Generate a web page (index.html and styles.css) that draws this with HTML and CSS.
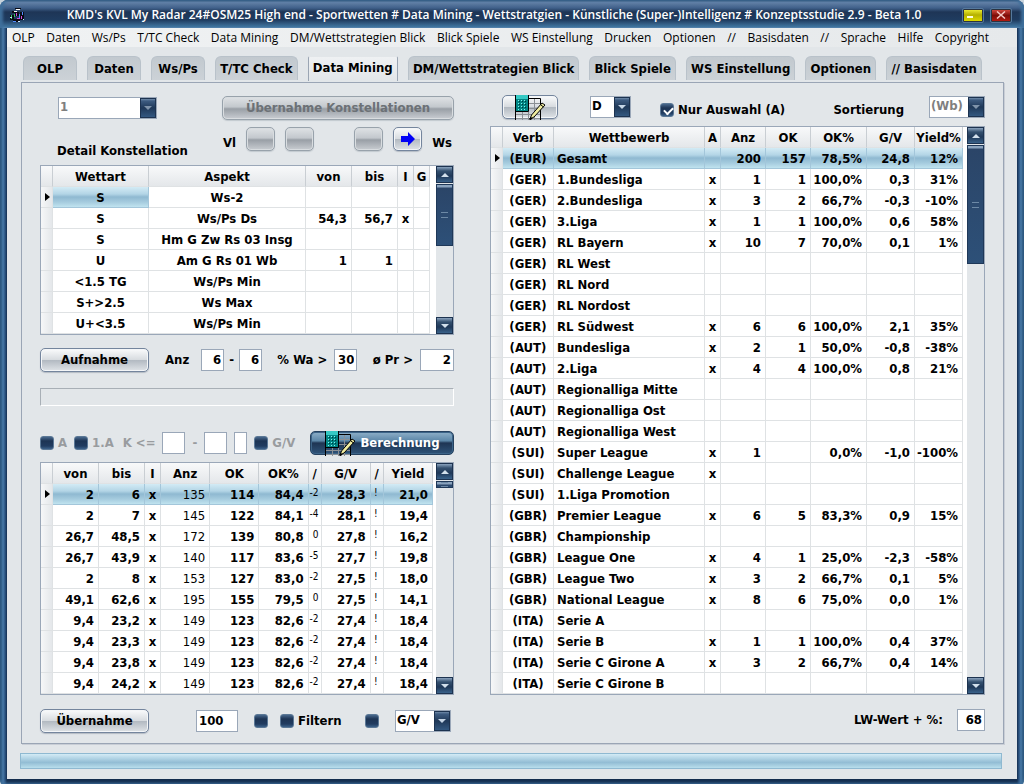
FILE: index.html
```html
<!DOCTYPE html>
<html lang="de">
<head>
    <meta charset="UTF-8">
    <meta name="viewport" content="width=device-width, initial-scale=1.0">
    <title>KMD's KVL My Radar 24#OSM25</title>
    <link rel="stylesheet" href="styles.css">
</head>
<body>
    <!-- Icon shared by the two calculation buttons -->
    <svg class="defs" aria-hidden="true">
        <symbol id="calc" viewBox="0 0 32 25">
            <path d="M8.500 17V25M14.500 17V25M20.500 4V25M15 8.500H26M15 13.500H26M2 19.500H26M2 23.500H26" fill="none" stroke="#8a8f94"/>
            <path d="M1.500 25V16M15 3.500H26.500V25" fill="none" stroke="#000"/>
            <path d="M1 0H15V16H1Z" fill="#008584"/>
            <path d="M2 0H14V4H2Z" fill="#35c9c4"/>
            <path d="M1.500 0V16.500H14.500V0" fill="none" stroke="#000"/>
            <path d="M4 5.500H13M4 8.500H13M4 11.500H13M4 14.500H13" stroke="#7df5ee" stroke-dasharray="1 2"/>
            <path d="M5 6.500H13M5 9.500H13M5 12.500H13" stroke="#003c3c" stroke-dasharray="1 2"/>
            <path d="M28 8L31 10L20 22L16 24L17.500 20Z" fill="#f1eda0" stroke="#000"/>
            <path d="M27 10L29.500 12" stroke="#000"/>
            <path d="M15.500 24.500L18 23" stroke="#000" stroke-width="2"/>
        </symbol>
    </svg>

    <div class="window">
        <header class="titlebar">
            <svg class="app-icon" viewBox="0 0 16 16" aria-hidden="true">
                <path d="M3 4H7V6H3ZM6 1H12V2H6ZM1 8H5V13H1ZM6 5H10V9H6ZM11 5H15V13H11ZM4 12H11V15H4Z" fill="#0a0a14"/>
                <path d="M7 2.500H11M5 4.500H8" stroke="#fff"/>
                <path d="M2.500 8V12M5.500 7V10" stroke="#39c46b"/>
                <path d="M7.500 6V9M8 11.500H11M12.500 9V12" stroke="#d24be0"/>
                <path d="M10.500 7V11M13.500 5V8M4 14.500H7" stroke="#4f8cff"/>
                <path d="M1 10.500H3M9 14.500H11M14 12.500H15" stroke="#c9e6ff"/>
            </svg>
            <h1 class="title">KMD's KVL My Radar 24#OSM25 High end - Sportwetten # Data Mining - Wettstratgien - Künstliche (Super-)Intelligenz # Konzeptsstudie 2.9 - Beta 1.0</h1>
            <button class="win-btn minimize" aria-label="Minimieren"></button>
            <button class="win-btn close" aria-label="Schließen">
                <svg viewBox="0 0 10 8" width="10" height="8"><path d="M1 0.500L9 7.500M9 0.500L1 7.500" stroke="#f3c8c4" stroke-width="1.500"/></svg>
            </button>
        </header>

        <div class="client">
            <nav class="menu">
                <a href="#">OLP</a>
                <a href="#">Daten</a>
                <a href="#">Ws/Ps</a>
                <a href="#">T/TC Check</a>
                <a href="#">Data Mining</a>
                <a href="#">DM/Wettstrategien Blick</a>
                <a href="#">Blick Spiele</a>
                <a href="#">WS Einstellung</a>
                <a href="#">Drucken</a>
                <a href="#">Optionen</a>
                <span>//</span>
                <a href="#">Basisdaten</a>
                <span>//</span>
                <a href="#">Sprache</a>
                <a href="#">Hilfe</a>
                <a href="#">Copyright</a>
            </nav>

            <div class="tabs" role="tablist">
                <button class="tab" role="tab">OLP</button>
                <button class="tab" role="tab">Daten</button>
                <button class="tab" role="tab">Ws/Ps</button>
                <button class="tab" role="tab">T/TC Check</button>
                <button class="tab active" role="tab" aria-selected="true">Data Mining</button>
                <button class="tab" role="tab">DM/Wettstrategien Blick</button>
                <button class="tab" role="tab">Blick Spiele</button>
                <button class="tab" role="tab">WS Einstellung</button>
                <button class="tab" role="tab">Optionen</button>
                <button class="tab" role="tab">// Basisdaten</button>
            </div>

            <main class="panel">
                <section class="left">
                    <div class="row top-row">
                        <div class="select w-100">
                            <select aria-label="Konstellation" disabled><option>1</option></select>
                        </div>
                        <button class="btn takeover" disabled>Übernahme Konstellationen</button>
                    </div>

                    <div class="row nav-row">
                        <h2 class="caption">Detail Konstellation</h2>
                        <span>Vl</span>
                        <button class="btn step" aria-label="Erste" disabled></button>
                        <button class="btn step" aria-label="Zurück" disabled></button>
                        <button class="btn step step-right" aria-label="Vor" disabled></button>
                        <button class="btn step" aria-label="Weiter">
                            <svg viewBox="0 0 14 14" width="14" height="14"><path d="M0 4H7V0L14 7L7 14V10H0Z" fill="#0000f5"/></svg>
                        </button>
                        <span>Ws</span>
                    </div>

                    <div class="grid">
                        <table class="details">
                            <colgroup><col class="c-mark"><col class="c-art"><col><col class="c-num"><col class="c-num"><col class="c-flag"><col class="c-flag"></colgroup>
                            <thead>
                                <tr><th></th><th>Wettart</th><th>Aspekt</th><th>von</th><th>bis</th><th>I</th><th>G</th></tr>
                            </thead>
                            <tbody id="details"></tbody>
                        </table>
                        <div class="scroll"><i class="up"></i><i class="thumb thumb-details"></i><i class="down"></i></div>
                    </div>

                    <div class="row record-row">
                        <button class="btn wide">Aufnahme</button>
                        <label class="anz" for="anzFrom">Anz</label>
                        <input class="field w-24" id="anzFrom" type="text" value="6">
                        <label class="dash" for="anzTo">-</label>
                        <input class="field w-24" id="anzTo" type="text" value="6">
                        <label class="push" for="wa">% Wa &gt;</label>
                        <input class="field w-24" id="wa" type="text" value="30">
                        <label class="push" for="pr">ø Pr &gt;</label>
                        <input class="field w-34" id="pr" type="text" value="2">
                    </div>

                    <div class="track"></div>

                    <div class="row calc-row">
                        <label class="check muted"><input type="checkbox" disabled>A</label>
                        <label class="check muted"><input type="checkbox" disabled>1.A</label>
                        <label class="k-label muted" for="kFrom">K &lt;=</label>
                        <input class="field w-24" id="kFrom" type="text" disabled>
                        <label class="muted" for="kTo">-</label>
                        <input class="field w-24" id="kTo" type="text" disabled>
                        <input class="field w-14" type="text" aria-label="K Option" disabled>
                        <label class="check muted"><input type="checkbox" disabled>G/V</label>
                        <button class="btn dark"><svg class="calc-icon"><use href="#calc"/></svg>Berechnung</button>
                    </div>

                    <div class="grid">
                        <table class="results">
                            <colgroup><col class="c-mark"><col class="c-num"><col class="c-num"><col class="c-flag"><col><col><col><col class="c-sign"><col><col class="c-sign"><col></colgroup>
                            <thead>
                                <tr><th></th><th>von</th><th>bis</th><th>I</th><th>Anz</th><th>OK</th><th>OK%</th><th>/</th><th>G/V</th><th>/</th><th>Yield</th></tr>
                            </thead>
                            <tbody id="results"></tbody>
                        </table>
                        <div class="scroll"><i class="up"></i><i class="thumb thumb-results"></i><i class="down"></i></div>
                    </div>

                    <div class="row bottom-row">
                        <button class="btn wide">Übernahme</button>
                        <input class="field limit" type="text" value="100" aria-label="Limit">
                        <input type="checkbox" aria-label="Limit aktiv">
                        <label class="check filter"><input type="checkbox">Filtern</label>
                        <input type="checkbox" aria-label="Sortieren">
                        <div class="select w-56">
                            <select aria-label="Sortierfeld"><option>G/V</option></select>
                        </div>
                    </div>
                </section>

                <section class="right">
                    <div class="row league-row">
                        <button class="btn calc" aria-label="Berechnen"><svg class="calc-icon"><use href="#calc"/></svg></button>
                        <div class="select w-42">
                            <select aria-label="Modus"><option>D</option></select>
                        </div>
                        <label class="check"><input type="checkbox" checked>Nur Auswahl (A)</label>
                        <label class="sort-label" for="sort">Sortierung</label>
                        <div class="select w-56">
                            <select id="sort" disabled><option>(Wb)</option></select>
                        </div>
                    </div>

                    <div class="grid">
                        <table class="leagues">
                            <colgroup><col class="c-mark"><col class="c-verb"><col><col class="c-flag"><col class="c-count"><col class="c-count"><col class="c-pct"><col class="c-yield"><col class="c-yield"></colgroup>
                            <thead>
                                <tr><th></th><th>Verb</th><th>Wettbewerb</th><th>A</th><th>Anz</th><th>OK</th><th>OK%</th><th>G/V</th><th>Yield%</th></tr>
                            </thead>
                            <tbody id="leagues"></tbody>
                        </table>
                        <div class="scroll"><i class="up"></i><i class="thumb thumb-leagues"></i><i class="down"></i></div>
                    </div>

                    <div class="row bottom-row lw-row">
                        <label for="lw">LW-Wert + %:</label>
                        <input class="field w-28" id="lw" type="text" value="68">
                    </div>
                </section>
            </main>

            <div class="status"></div>
        </div>
    </div>

    <script src="script.js"></script>
</body>
</html>
```

FILE: styles.css
```css
* {
    box-sizing: border-box;
}

body {
    margin: 0;
    font-family: "DejaVu Sans Condensed", "DejaVu Sans", sans-serif;
    font-size: 13px;
    font-weight: bold;
    line-height: 16px;
    color: #000;
    background-color: #c8d3dc;
}

button, input, select {
    font: inherit;
    color: inherit;
    margin: 0;
}

.defs {
    display: none;
}

/* Window frame */
.window {
    min-height: 100vh;
    display: flex;
    flex-direction: column;
    padding: 0 7px 7px;
    border-radius: 8px 8px 6px 6px;
    background: linear-gradient(to right, #1d4467, #4a7ba8 3px, #2c5583 5px, #142d4e 7px, #142d4e calc(100% - 7px), #2c5583 calc(100% - 5px), #4a7ba8 calc(100% - 3px), #1d4467);
    box-shadow: inset 0 -3px 3px #3f6f9b;
}

.titlebar {
    display: flex;
    align-items: center;
    height: 28px;
    margin: 0 -7px;
    padding: 2px 13px 0 9px;
    border-radius: 8px 8px 0 0;
    background: linear-gradient(#1d3a5c, #6583a8 2px, #40608a 8px, #1e3556 12px, #1f3c60 20px, #4378a2 27px, #8fb8d4);
    box-shadow: inset 3px 0 3px #3f6f9b, inset -3px 0 3px #3f6f9b;
}

.app-icon {
    width: 16px;
    height: 16px;
}

.title {
    flex: 1;
    margin: 0;
    padding-left: 8px;
    font-family: "Open Sans", "Noto Sans", sans-serif;
    font-size: 12px;
    font-weight: 600;
    line-height: 16px;
    text-align: center;
    white-space: nowrap;
    color: #fff;
}

.win-btn {
    display: flex;
    align-items: center;
    justify-content: center;
    width: 20px;
    height: 13px;
    margin-left: 8px;
    padding: 0;
    border: 1px solid #2a3340;
    border-radius: 1px;
    outline: 1px solid #55789c;
}

.minimize {
    background: linear-gradient(#eaea30, #b5b000 45%, #dcd800);
}

.minimize::before {
    content: "";
    width: 6px;
    height: 2px;
    margin: 4px 6px 0 0;
    background-color: #fffde0;
}

.close {
    background: linear-gradient(#d0453c, #7e0d08 50%, #b01a10);
}

.client {
    flex: 1;
    display: flex;
    flex-direction: column;
    background-color: #e2e6e9;
}

/* Menu and tabs */
.menu {
    display: flex;
    justify-content: space-between;
    padding: 2px 28px 1px 5px;
    font-family: "Open Sans", "Noto Sans", sans-serif;
    font-size: 12px;
    font-weight: normal;
    white-space: nowrap;
    background: linear-gradient(to right, #f0f2f3, #e6e9eb);
}

.menu a {
    color: inherit;
    text-decoration: none;
}

.tabs {
    display: flex;
    gap: 10px;
    margin: 9px 35px 0 16px;
}

.tab {
    flex: 1 1 auto;
    min-width: 54px;
    height: 24px;
    padding: 0 4px;
    border: 1px solid #b9c2ca;
    border-bottom: none;
    border-radius: 6px 6px 0 0;
    white-space: nowrap;
    background: linear-gradient(#c2c9cf, #ccd2d7);
}

.tab.active {
    height: 25px;
    margin-bottom: 1px;
    padding-bottom: 3px;
    border-color: #e2e6e9 #9aa5b3;
    border-radius: 2px 2px 0 0;
    background: linear-gradient(#eff1f3, #e2e6e9);
}

.panel {
    display: grid;
    grid-template-columns: 414fr 495fr;
    gap: 36px;
    margin: 0 13px 0 14px;
    padding: 13px 18px 10px;
    border: 1px solid #9aa5b5;
    box-shadow: 1px 1px 0 #c9ced6;
}

.left, .right {
    min-width: 0;
}

.row {
    display: flex;
    align-items: center;
    white-space: nowrap;
}

/* Buttons */
.btn {
    display: flex;
    align-items: center;
    justify-content: center;
    height: 24px;
    padding: 0;
    border: 1px solid #74859d;
    border-radius: 5px;
    background: linear-gradient(#fafbfc, #d8dce0 48%, #b3bac2 52%, #dfe3e7);
    box-shadow: inset 0 0 0 1px #f4f6f8, 0 1px 1px #b4bbc4;
}

.btn:disabled {
    border-color: #98a2ab;
    color: #6c7176;
    background: linear-gradient(#dfe2e5, #c3c8cd 45%, #999fa6 54%, #c9cdd2);
    box-shadow: inset 0 0 0 1px #d9dde0, 0 1px 1px #c3c9cf;
}

.btn.wide {
    width: 109px;
}

.btn.dark {
    width: 144px;
    margin-left: auto;
    gap: 4px;
    border-color: #25415f;
    color: #fff;
    background: linear-gradient(#8fb0c9, #5c87a8 40%, #1e3553 50%, #2f5479);
    box-shadow: inset 0 0 0 1px #3c6488;
}

.calc-icon {
    width: 32px;
    height: 25px;
}

/* Fields */
.field {
    flex: none;
    height: 22px;
    padding: 0 2px 2px;
    border: 1px solid #9aa7b8;
    text-align: right;
    background-color: #fff;
}

.w-14 { width: 13px; }
.w-24 { width: 23px; }
.w-28 { width: 28px; }
.w-34 { width: 34px; }
.w-42 { width: 41px; }
.w-56 { width: 56px; }
.w-100 { width: 99px; }

.select {
    flex: none;
    position: relative;
    height: 22px;
}

.select select {
    width: 100%;
    height: 22px;
    padding: 0 18px 2px 1px;
    border: 1px solid #9aa7b8;
    border-radius: 0;
    appearance: none;
    background-color: #fff;
}

.select select:disabled {
    color: #7f7f7f;
    opacity: 1;
}

.select::before {
    content: "";
    position: absolute;
    top: 1px;
    right: 1px;
    width: 16px;
    height: 20px;
    background: linear-gradient(#8aa3be, #3d5b80 3px, #1f3858 50%, #355b84);
    box-shadow: inset 0 0 0 1px #1d3350;
    pointer-events: none;
}

.select::after {
    content: "";
    position: absolute;
    top: 9px;
    right: 5px;
    border: 4px solid transparent;
    border-top-color: #c6d6e6;
    border-bottom: none;
    pointer-events: none;
}

.select:has(:disabled)::after {
    border-top-color: #7f93aa;
}

input[type="checkbox"] {
    flex: none;
    width: 14px;
    height: 14px;
    border: 1px solid #5b7896;
    border-radius: 3px;
    appearance: none;
    background: linear-gradient(#48688c, #1d3454 4px, #213c60 9px, #3c6189);
}

input[type="checkbox"]:checked::before {
    content: "";
    display: block;
    width: 7px;
    height: 4px;
    margin: 3px 0 0 3px;
    border-left: 2px solid #fff;
    border-bottom: 2px solid #fff;
    transform: rotate(-45deg);
}

.check {
    display: flex;
    align-items: center;
    gap: 4px;
}

.muted {
    color: #999c9f;
}

/* Rows of the left side */
.top-row {
    justify-content: space-between;
    padding-left: 18px;
}

.takeover {
    width: 232px;
}

.nav-row {
    gap: 10px;
    height: 45px;
    padding: 0 2px 0 17px;
}

.caption {
    flex: 1;
    margin: 16px 0 0;
    font-size: 13px;
    line-height: 16px;
}

.btn.step {
    width: 29px;
    margin-bottom: 8px;
}

.step-right {
    margin-left: 30px;
}

.record-row {
    margin-top: 13px;
}

.anz {
    margin: 0 12px 0 16px;
}

.dash {
    margin: 0 5px;
}

.push {
    margin-left: auto;
    margin-right: 7px;
}

.track {
    height: 18px;
    margin-top: 16px;
    border: 1px solid #a8afb6;
    border-right-color: #fff;
    border-bottom-color: #fff;
}

.calc-row {
    gap: 7px;
    margin: 25px 0 7px;
}

.k-label {
    margin-left: 2px;
}

.bottom-row {
    margin-top: 14px;
}

.left .bottom-row {
    padding-right: 3px;
}

.limit {
    width: 42px;
    margin: 0 16px 0 47px;
    text-align: left;
}

.filter {
    margin-left: 12px;
    margin-right: auto;
}

.bottom-row .w-56 {
    margin-left: 16px;
}

/* Row over the league table */
.league-row {
    height: 24px;
    margin: -1px 0 7px;
    padding-left: 12px;
}

.btn.calc {
    width: 56px;
    margin-right: 32px;
}

.league-row .check {
    margin: 6px auto 0 29px;
}

.sort-label {
    margin: 6px 25px 0 0;
}

.lw-row {
    justify-content: flex-end;
    gap: 14px;
}

/* Tables */
.grid {
    display: flex;
    gap: 6px;
    border: 1px solid #9aa7b8;
    background-color: #fff;
}

table {
    flex: 1;
    width: 0;
    table-layout: fixed;
    border-collapse: separate;
    border-spacing: 0;
}

th, td {
    height: 21px;
    padding: 1px 4px 0 2px;
    border-right: 1px solid #dfe2e4;
    border-bottom: 1px solid #dfe2e4;
    line-height: 16px;
    white-space: nowrap;
    text-align: right;
}

th {
    padding: 1px 0 0;
    border-right-color: #c9ced3;
    text-align: center;
    background: linear-gradient(#f8f9fa, #e4e7ea);
}

td:first-child {
    padding: 0;
    background: linear-gradient(to right, #f6f7f8, #e4e7ea);
}

.c-mark { width: 12px; }
.c-art { width: 96px; }
.c-num { width: 46px; }
.c-flag { width: 16px; }
.c-sign { width: 13px; }
.c-verb { width: 51px; }
.c-count { width: 45px; }
.c-pct { width: 56px; }
.c-yield { width: 48px; }

.center {
    padding: 1px 0 0;
    text-align: center;
}

.name {
    padding-left: 3px;
    text-align: left;
}

.thin {
    font-weight: normal;
}

.small {
    padding: 0 2px 3px 0;
    font-size: 10px;
    font-weight: normal;
}

.marker {
    display: block;
    margin-left: 4px;
    width: 0;
    border: 4px solid transparent;
    border-left: 5px solid #000;
    border-right: none;
}

.selected {
    border-color: #a3c6da;
    background: linear-gradient(#d3ebf5, #b3d5e6 35%, #8fb9d1 50%, #a5cbde 75%, #c0e3ef);
}

.scroll {
    flex: none;
    display: flex;
    flex-direction: column;
    width: 17px;
    background-color: #e2e6e9;
}

.leagues + .scroll {
    margin-left: -2px;
}

.results + .scroll {
    margin-left: -3px;
}

.up, .down {
    display: flex;
    align-items: center;
    justify-content: center;
    height: 17px;
    border: 1px solid #1d3350;
    background: linear-gradient(#8aa3be, #34506f 4px, #1f3858 60%, #3a628a);
}

.up::before, .down::before {
    content: "";
    border: 4px solid transparent;
}

.up::before {
    border-top: none;
    border-bottom-color: #d3e0ec;
}

.down::before {
    border-bottom: none;
    border-top-color: #d3e0ec;
}

.down {
    margin-top: auto;
}

.thumb {
    display: flex;
    align-items: center;
    justify-content: center;
    margin-top: 1px;
    border: 1px solid #1f3858;
    background: linear-gradient(#8aa3be, #8aa3be 2px, #2b4568 3px, #2d5078);
}

.thumb::before {
    content: "";
    width: 7px;
    height: 4px;
    border: 1px solid #6d89a6;
    border-left: none;
    border-right: none;
}

.thumb-details { height: 62px; }
.thumb-results { height: 7px; }
.thumb-results::before { height: 3px; }
.thumb-leagues { height: 119px; }

.status {
    height: 16px;
    margin: 9px 15px 10px 13px;
    border: 1px solid #8fb9d1;
    background: linear-gradient(#d3ebf5, #aed1e3 35%, #93bdd4 60%, #b9deec);
}
```

FILE: script.js
```js
const details = [
    ['S', 'Ws-2', '', '', '', ''],
    ['S', 'Ws/Ps Ds', '54,3', '56,7', 'x', ''],
    ['S', 'Hm G Zw Rs 03 Insg', '', '', '', ''],
    ['U', 'Am G Rs 01 Wb', '1', '1', '', ''],
    ['<1.5 TG', 'Ws/Ps Min', '', '', '', ''],
    ['S+>2.5', 'Ws Max', '', '', '', ''],
    ['U+<3.5', 'Ws/Ps Min', '', '', '', '']
];

const results = [
    ['2', '6', 'x', '135', '114', '84,4', '-2', '28,3', '!', '21,0'],
    ['2', '7', 'x', '145', '122', '84,1', '-4', '28,1', '!', '19,4'],
    ['26,7', '48,5', 'x', '172', '139', '80,8', '0', '27,8', '!', '16,2'],
    ['26,7', '43,9', 'x', '140', '117', '83,6', '-5', '27,7', '!', '19,8'],
    ['2', '8', 'x', '153', '127', '83,0', '-2', '27,5', '!', '18,0'],
    ['49,1', '62,6', 'x', '195', '155', '79,5', '0', '27,5', '!', '14,1'],
    ['9,4', '23,2', 'x', '149', '123', '82,6', '-2', '27,4', '!', '18,4'],
    ['9,4', '23,3', 'x', '149', '123', '82,6', '-2', '27,4', '!', '18,4'],
    ['9,4', '23,8', 'x', '149', '123', '82,6', '-2', '27,4', '!', '18,4'],
    ['9,4', '24,2', 'x', '149', '123', '82,6', '-2', '27,4', '!', '18,4']
];

const leagues = [
    ['(EUR)', 'Gesamt', '', '200', '157', '78,5%', '24,8', '12%'],
    ['(GER)', '1.Bundesliga', 'x', '1', '1', '100,0%', '0,3', '31%'],
    ['(GER)', '2.Bundesliga', 'x', '3', '2', '66,7%', '-0,3', '-10%'],
    ['(GER)', '3.Liga', 'x', '1', '1', '100,0%', '0,6', '58%'],
    ['(GER)', 'RL Bayern', 'x', '10', '7', '70,0%', '0,1', '1%'],
    ['(GER)', 'RL West', '', '', '', '', '', ''],
    ['(GER)', 'RL Nord', '', '', '', '', '', ''],
    ['(GER)', 'RL Nordost', '', '', '', '', '', ''],
    ['(GER)', 'RL Südwest', 'x', '6', '6', '100,0%', '2,1', '35%'],
    ['(AUT)', 'Bundesliga', 'x', '2', '1', '50,0%', '-0,8', '-38%'],
    ['(AUT)', '2.Liga', 'x', '4', '4', '100,0%', '0,8', '21%'],
    ['(AUT)', 'Regionalliga Mitte', '', '', '', '', '', ''],
    ['(AUT)', 'Regionalliga Ost', '', '', '', '', '', ''],
    ['(AUT)', 'Regionalliga West', '', '', '', '', '', ''],
    ['(SUI)', 'Super League', 'x', '1', '', '0,0%', '-1,0', '-100%'],
    ['(SUI)', 'Challenge League', 'x', '', '', '', '', ''],
    ['(SUI)', '1.Liga Promotion', '', '', '', '', '', ''],
    ['(GBR)', 'Premier League', 'x', '6', '5', '83,3%', '0,9', '15%'],
    ['(GBR)', 'Championship', '', '', '', '', '', ''],
    ['(GBR)', 'League One', 'x', '4', '1', '25,0%', '-2,3', '-58%'],
    ['(GBR)', 'League Two', 'x', '3', '2', '66,7%', '0,1', '5%'],
    ['(GBR)', 'National League', 'x', '8', '6', '75,0%', '0,0', '1%'],
    ['(ITA)', 'Serie A', '', '', '', '', '', ''],
    ['(ITA)', 'Serie B', 'x', '1', '1', '100,0%', '0,4', '37%'],
    ['(ITA)', 'Serie C Girone A', 'x', '3', '2', '66,7%', '0,4', '14%'],
    ['(ITA)', 'Serie C Girone B', '', '', '', '', '', '']
];

// selectedCells: how many cells of the first row are highlighted
function fillTable(id, rows, classes, selectedCells) {
    const body = document.getElementById(id);
    rows.forEach((row, r) => {
        const tr = body.insertRow();
        const mark = tr.insertCell();
        if (r === 0) {
            mark.innerHTML = '<span class="marker"></span>';
        }
        row.forEach((text, c) => {
            const td = tr.insertCell();
            td.textContent = text;
            td.className = classes[c];
            if (r === 0 && c < selectedCells) {
                td.classList.add('selected');
            }
        });
    });
}

fillTable('details', details, ['center', 'center', '', '', 'center', 'center'], 1);
fillTable('results', results, ['', '', 'center', 'thin', '', '', 'small', '', 'small center', ''], 10);
fillTable('leagues', leagues, ['center', 'name', 'center', '', '', '', '', ''], 8);
```
